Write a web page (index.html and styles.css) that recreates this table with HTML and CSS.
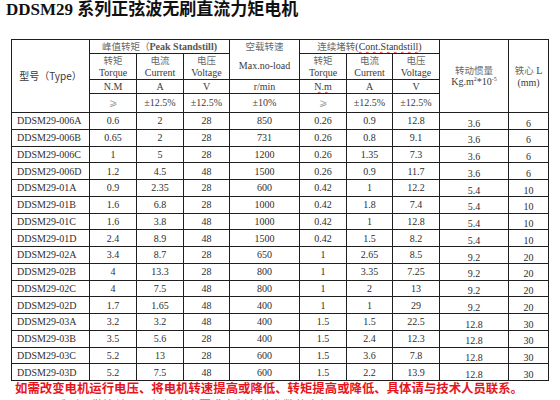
FILE: index.html
```html
<!DOCTYPE html>
<html lang="zh">
<head>
<meta charset="utf-8">
<title>DDSM29</title>
<link rel="stylesheet" href="styles.css">
</head>
<body>
<div class="page">
  <h1 class="title">DDSM29 系列正弦波无刷直流力矩电机</h1>
  <table class="spec">
    <colgroup>
      <col class="c-type"><col class="c-n"><col class="c-n"><col class="c-v">
      <col class="c-speed"><col class="c-n"><col class="c-v"><col class="c-n">
      <col class="c-inertia"><col class="c-len">
    </colgroup>
    <thead>
      <tr class="h1">
        <th rowspan="4" class="zh">型号（Type）</th>
        <th colspan="3"><span class="zh">峰值转矩（</span><b class="en">Peak Standstill)</b></th>
        <th rowspan="2" class="top"><div class="l1 zh">空载转速</div><div class="l2">Max.no-load</div></th>
        <th colspan="3"><span class="zh">连续堵转</span><span class="wavy">(Cont.Standstill)</span></th>
        <th rowspan="4"><div class="zh">转动惯量</div><div>Kg.m<sup>2</sup>*10<sup>-5</sup></div></th>
        <th rowspan="4"><div><span class="zh">铁心</span> L</div><div>(mm)</div></th>
      </tr>
      <tr class="h2">
        <th><div class="zh">转矩</div><div>Torque</div></th>
        <th><div class="zh">电流</div><div>Current</div></th>
        <th><div class="zh">电压</div><div>Voltage</div></th>
        <th><div class="zh">转矩</div><div>Torque</div></th>
        <th><div class="zh">电流</div><div>Current</div></th>
        <th><div class="zh">电压</div><div>Voltage</div></th>
      </tr>
      <tr class="h3">
        <th>N.M</th><th>A</th><th>V</th><th>r/min</th><th><span class="wavy">N.m</span></th><th>A</th><th>V</th>
      </tr>
      <tr class="h4">
        <th class="ge">⩾</th><th>±12.5%</th><th>±12.5%</th><th>±10%</th><th class="ge">⩾</th><th>±12.5%</th><th>±12.5%</th>
      </tr>
    </thead>
    <tbody>
      <tr><td>DDSM29-006A</td><td>0.6</td><td>2</td><td>28</td><td>850</td><td>0.26</td><td>0.9</td><td>12.8</td><td class="low">3.6</td><td class="low">6</td></tr>
      <tr><td>DDSM29-006B</td><td>0.65</td><td>2</td><td>28</td><td>731</td><td>0.26</td><td>0.8</td><td>9.1</td><td class="low">3.6</td><td class="low">6</td></tr>
      <tr><td>DDSM29-006C</td><td>1</td><td>5</td><td>28</td><td>1200</td><td>0.26</td><td>1.35</td><td>7.3</td><td class="low">3.6</td><td class="low">6</td></tr>
      <tr><td>DDSM29-006D</td><td>1.2</td><td>4.5</td><td>48</td><td>1500</td><td>0.26</td><td>0.9</td><td>11.7</td><td class="low">3.6</td><td class="low">6</td></tr>
      <tr><td>DDSM29-01A</td><td>0.9</td><td>2.35</td><td>28</td><td>600</td><td>0.42</td><td>1</td><td>12.2</td><td class="low">5.4</td><td class="low">10</td></tr>
      <tr><td>DDSM29-01B</td><td>1.6</td><td>6.8</td><td>28</td><td>1000</td><td>0.42</td><td>1.8</td><td>7.4</td><td class="low">5.4</td><td class="low">10</td></tr>
      <tr><td>DDSM29-01C</td><td>1.6</td><td>3.8</td><td>48</td><td>1000</td><td>0.42</td><td>1</td><td>12.8</td><td class="low">5.4</td><td class="low">10</td></tr>
      <tr><td>DDSM29-01D</td><td>2.4</td><td>8.9</td><td>48</td><td>1500</td><td>0.42</td><td>1.5</td><td>8.2</td><td class="low">5.4</td><td class="low">10</td></tr>
      <tr><td>DDSM29-02A</td><td>3.4</td><td>8.7</td><td>28</td><td>650</td><td>1</td><td>2.65</td><td>8.5</td><td class="low">9.2</td><td class="low">20</td></tr>
      <tr><td>DDSM29-02B</td><td>4</td><td>13.3</td><td>28</td><td>800</td><td>1</td><td>3.35</td><td>7.25</td><td class="low">9.2</td><td class="low">20</td></tr>
      <tr><td>DDSM29-02C</td><td>4</td><td>7.5</td><td>48</td><td>800</td><td>1</td><td>2</td><td>13</td><td class="low">9.2</td><td class="low">20</td></tr>
      <tr><td>DDSM29-02D</td><td>1.7</td><td>1.65</td><td>48</td><td>400</td><td>1</td><td>1</td><td>29</td><td class="low">9.2</td><td class="low">20</td></tr>
      <tr><td>DDSM29-03A</td><td>3.2</td><td>3.2</td><td>48</td><td>400</td><td>1.5</td><td>1.5</td><td>22.5</td><td class="low">12.8</td><td class="low">30</td></tr>
      <tr><td>DDSM29-03B</td><td>3.5</td><td>5.6</td><td>28</td><td>400</td><td>1.5</td><td>2.4</td><td>12.3</td><td class="low">12.8</td><td class="low">30</td></tr>
      <tr><td>DDSM29-03C</td><td>5.2</td><td>13</td><td>28</td><td>600</td><td>1.5</td><td>3.6</td><td>7.8</td><td class="low">12.8</td><td class="low">30</td></tr>
      <tr><td>DDSM29-03D</td><td>5.2</td><td>7.5</td><td>48</td><td>600</td><td>1.5</td><td>2.2</td><td>13.9</td><td class="low">12.8</td><td class="low">30</td></tr>
    </tbody>
  </table>
  <p class="note">如需改变电机运行电压、将电机转速提高或降低、转矩提高或降低、具体请与技术人员联系。</p>
  <p class="sub">系列可做比较可以根据客户要求定制各种参数的电机</p>
</div>
</body>
</html>
```

FILE: styles.css
```css
html, body {
  margin: 0;
  padding: 0;
  background: #ffffff;
}

.page {
  width: 560px;
  height: 400px;
  overflow: hidden;
  font-family: "Liberation Serif", "Noto Sans CJK SC", serif;
  color: #333333;
}

.title {
  margin: 0;
  padding-left: 6px;
  height: 20px;
  font-size: 17px;
  line-height: 20px;
  font-weight: 700;
  color: #111111;
  white-space: nowrap;
}

.spec {
  margin: 19px 0 0 11px;
  width: 537px;
  border-collapse: collapse;
  table-layout: fixed;
  font-size: 10px;
  line-height: 12px;
}

.c-type { width: 78px; }
.c-n { width: 47px; }
.c-v { width: 46px; }
.c-speed { width: 70px; }
.c-inertia { width: 69px; }
.c-len { width: 40px; }

.spec th,
.spec td {
  border: 1px solid #1f1f1f;
  padding: 0;
  text-align: center;
  vertical-align: middle;
  font-weight: 400;
  white-space: nowrap;
  overflow: hidden;
}

.spec th {
  color: #3a3a3a;
}

.zh {
  font-family: "Noto Sans CJK SC", sans-serif;
  color: #6a6a6a;
  font-weight: 400;
}

.en {
  font-weight: 700;
  color: #555555;
}

.spec th .zh {
  font-size: 9.5px;
}

.wavy {
  text-decoration: underline wavy #e0403a;
  text-decoration-thickness: 1px;
  text-underline-offset: 1px;
}

.h1 { height: 13px; }
.h2 { height: 26px; }
.h3 { height: 14px; }
.h4 { height: 19px; }

.h2 th div { line-height: 12.5px; }

.spec th.top {
  vertical-align: top;
}

.top .l1 {
  line-height: 12px;
}

.top .l2 {
  margin-top: 8px;
  line-height: 12px;
}

.spec sup {
  font-size: 6px;
  line-height: 0;
  vertical-align: 4px;
}

.spec th.ge {
  color: #a0a0a0;
}

.spec tbody tr {
  height: 16.75px;
}

.spec tbody td {
  color: #2e2e2e;
  line-height: 11px;
}

.spec tbody td:first-child {
  text-align: left;
  padding-left: 5px;
}

.spec tbody td.low {
  vertical-align: top;
  padding-top: 4.5px;
  line-height: 11px;
}

.note {
  margin: 0;
  padding-left: 15px;
  height: 15px;
  font-family: "Noto Sans CJK SC", sans-serif;
  font-size: 12.4px;
  line-height: 15px;
  font-weight: 700;
  color: #e8141c;
  white-space: nowrap;
}

.sub {
  margin: 2px 0 0 0;
  padding-left: 55px;
  font-family: "Noto Sans CJK SC", sans-serif;
  font-size: 12px;
  line-height: 14px;
  color: #888888;
  white-space: nowrap;
}
```
